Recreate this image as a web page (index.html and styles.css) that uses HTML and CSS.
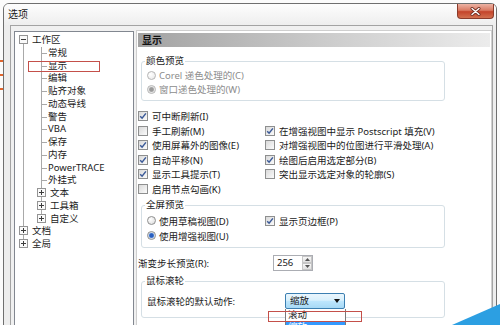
FILE: index.html
```html
<!DOCTYPE html>
<html lang="zh-CN">
<head>
    <meta charset="UTF-8">
    <title>选项</title>
    <link rel="stylesheet" href="styles.css">
</head>
<body>
    <!-- marcas naranjas fuera de la ventana -->
    <span class="mark mark-1"></span>
    <span class="mark mark-2"></span>
    <span class="mark mark-3"></span>

    <div class="window">
        <div class="titlebar">
            <span class="title">选项</span>
            <button class="close">
                <svg width="11" height="9" viewBox="0 0 11 9"><path d="M2 1.5L9 7.5M9 1.5L2 7.5" stroke="#6e2c20" stroke-width="3" stroke-linecap="round"/><path d="M2 1.5L9 7.5M9 1.5L2 7.5" stroke="#fff" stroke-width="1.4" stroke-linecap="round"/></svg>
            </button>
        </div>

        <div class="frame">
            <div class="client">
                <!-- arbol de categorias -->
                <div class="tree-box">
                    <ul class="tree">
                        <li><svg class="toggle" width="9" height="9" viewBox="0 0 9 9"><rect x="0.5" y="0.5" width="8" height="8" fill="#fafafa" stroke="#949494"/><path d="M2 4.5h5" stroke="#3c3c3c"/></svg>工作区
                            <ul>
                                <li class="leaf">常规</li>
                                <li class="leaf">显示<span class="ann ann-tree"></span></li>
                                <li class="leaf">编辑</li>
                                <li class="leaf">贴齐对象</li>
                                <li class="leaf">动态导线</li>
                                <li class="leaf">警告</li>
                                <li class="leaf">VBA</li>
                                <li class="leaf">保存</li>
                                <li class="leaf">内存</li>
                                <li class="leaf">PowerTRACE</li>
                                <li class="leaf">外挂式</li>
                                <li><svg class="toggle" width="9" height="9" viewBox="0 0 9 9"><rect x="0.5" y="0.5" width="8" height="8" fill="#fafafa" stroke="#949494"/><path d="M2 4.5h5M4.5 2v5" stroke="#3c3c3c"/></svg>文本</li>
                                <li><svg class="toggle" width="9" height="9" viewBox="0 0 9 9"><rect x="0.5" y="0.5" width="8" height="8" fill="#fafafa" stroke="#949494"/><path d="M2 4.5h5M4.5 2v5" stroke="#3c3c3c"/></svg>工具箱</li>
                                <li><svg class="toggle" width="9" height="9" viewBox="0 0 9 9"><rect x="0.5" y="0.5" width="8" height="8" fill="#fafafa" stroke="#949494"/><path d="M2 4.5h5M4.5 2v5" stroke="#3c3c3c"/></svg>自定义</li>
                            </ul>
                        </li>
                        <li><svg class="toggle" width="9" height="9" viewBox="0 0 9 9"><rect x="0.5" y="0.5" width="8" height="8" fill="#fafafa" stroke="#949494"/><path d="M2 4.5h5M4.5 2v5" stroke="#3c3c3c"/></svg>文档</li>
                        <li><svg class="toggle" width="9" height="9" viewBox="0 0 9 9"><rect x="0.5" y="0.5" width="8" height="8" fill="#fafafa" stroke="#949494"/><path d="M2 4.5h5M4.5 2v5" stroke="#3c3c3c"/></svg>全局</li>
                    </ul>
                </div>

                <!-- panel de la pagina "显示" -->
                <div class="panel">
                    <div class="panel-head">显示</div>

                    <fieldset class="group group-color">
                        <legend>颜色预览</legend>
                        <div class="opt disabled"><span class="radio"></span>Corel 递色处理的(C)</div>
                        <div class="opt disabled"><span class="radio on"></span>窗口递色处理的(W)</div>
                    </fieldset>

                    <div class="checks">
                        <div class="opt"><span class="check"><svg width="8" height="8" viewBox="0 0 8 8"><path d="M1.2 4.2L3.1 6.2L6.9 1.4" fill="none" stroke="#3b5a98" stroke-width="1.5"/></svg></span>可中断刷新(I)</div>
                        <div></div>
                        <div class="opt"><span class="check"></span>手工刷新(M)</div>
                        <div class="opt"><span class="check"><svg width="8" height="8" viewBox="0 0 8 8"><path d="M1.2 4.2L3.1 6.2L6.9 1.4" fill="none" stroke="#3b5a98" stroke-width="1.5"/></svg></span>在增强视图中显示 Postscript 填充(V)</div>
                        <div class="opt"><span class="check"><svg width="8" height="8" viewBox="0 0 8 8"><path d="M1.2 4.2L3.1 6.2L6.9 1.4" fill="none" stroke="#3b5a98" stroke-width="1.5"/></svg></span>使用屏幕外的图像(E)</div>
                        <div class="opt"><span class="check"></span>对增强视图中的位图进行平滑处理(A)</div>
                        <div class="opt"><span class="check"><svg width="8" height="8" viewBox="0 0 8 8"><path d="M1.2 4.2L3.1 6.2L6.9 1.4" fill="none" stroke="#3b5a98" stroke-width="1.5"/></svg></span>自动平移(N)</div>
                        <div class="opt"><span class="check"><svg width="8" height="8" viewBox="0 0 8 8"><path d="M1.2 4.2L3.1 6.2L6.9 1.4" fill="none" stroke="#3b5a98" stroke-width="1.5"/></svg></span>绘图后启用选定部分(B)</div>
                        <div class="opt"><span class="check"><svg width="8" height="8" viewBox="0 0 8 8"><path d="M1.2 4.2L3.1 6.2L6.9 1.4" fill="none" stroke="#3b5a98" stroke-width="1.5"/></svg></span>显示工具提示(T)</div>
                        <div class="opt"><span class="check"></span>突出显示选定对象的轮廓(S)</div>
                        <div class="opt"><span class="check"></span>启用节点勾画(K)</div>
                    </div>

                    <fieldset class="group group-full">
                        <legend>全屏预览</legend>
                        <div class="full-grid">
                            <div class="opt"><span class="radio"></span>使用草稿视图(D)</div>
                            <div class="opt"><span class="check"><svg width="8" height="8" viewBox="0 0 8 8"><path d="M1.2 4.2L3.1 6.2L6.9 1.4" fill="none" stroke="#3b5a98" stroke-width="1.5"/></svg></span>显示页边框(P)</div>
                            <div class="opt"><span class="radio on"></span>使用增强视图(U)</div>
                        </div>
                    </fieldset>

                    <div class="spin-row">
                        <span class="spin-label">渐变步长预览(R):</span>
                        <div class="spin">
                            <span class="spin-value">256</span>
                            <div class="spin-btns">
                                <span class="spin-btn"><svg width="5" height="3" viewBox="0 0 5 3"><path d="M0 3L2.5 0L5 3Z" fill="#555"/></svg></span>
                                <span class="spin-btn"><svg width="5" height="3" viewBox="0 0 5 3"><path d="M0 0L2.5 3L5 0Z" fill="#555"/></svg></span>
                            </div>
                        </div>
                    </div>

                    <fieldset class="group group-wheel">
                        <legend>鼠标滚轮</legend>
                        <div class="wheel-row">
                            <span class="wheel-label">鼠标滚轮的默认动作:</span>
                            <div class="combo">
                                <span class="combo-value">缩放</span>
                                <svg width="6" height="4" viewBox="0 0 6 4"><path d="M0 0L3 4L6 0Z" fill="#111"/></svg>
                                <div class="combo-list">
                                    <div class="combo-item">滚动</div>
                                    <div class="combo-item active">缩放</div>
                                </div>
                                <span class="ann ann-list"></span>
                            </div>
                        </div>
                    </fieldset>
                </div>
            </div>
        </div>
    </div>

    <svg class="corner" width="48" height="21" viewBox="0 0 48 21"><path d="M0 21L48 0L48 21Z" fill="#2c9fe2"/></svg>
</body>
</html>
```

FILE: styles.css
```css
* {
    box-sizing: border-box;
}
body {
    margin: 0;
    width: 500px;
    height: 325px;
    overflow: hidden;
    position: relative;
    background-color: #fbfbfb;
    font-family: "Noto Sans", "Noto Sans CJK SC", sans-serif;
    font-size: 9.5px;
    color: #1a1a1a;
}
.mark {
    position: absolute;
    left: 0;
    width: 3px;
    height: 2px;
    background-color: #e0652e;
}
.mark-1 { top: 60px; }
.mark-2 { top: 74px; }
.mark-3 { top: 88px; }

.window {
    margin: 3px 0 0 3px;
    width: 494px;
    height: 330px;
    border: 1px solid #6f6f6f;
    border-radius: 6px 6px 0 0;
    background-color: #ededed;
    display: flex;
    flex-direction: column;
}
.titlebar {
    height: 21px;
    flex: none;
    display: flex;
    justify-content: space-between;
    align-items: flex-start;
    padding: 0 2px 0 4px;
    background: linear-gradient(#fdfdfd, #eeeeee);
    border-radius: 5px 5px 0 0;
}
.title {
    line-height: 21px;
    font-size: 10px;
    color: #1a1a1a;
}
.close {
    width: 37px;
    height: 15px;
    padding: 0;
    border: 1px solid #8a3b2b;
    border-top: none;
    border-radius: 0 0 4px 4px;
    background: linear-gradient(#ecb3a4, #d97a63 45%, #c4442b 55%, #d2704f);
    display: flex;
    align-items: center;
    justify-content: center;
}
.frame {
    flex: 1;
    display: flex;
    padding: 0 3px 0 6px;
}
.client {
    flex: 1;
    display: flex;
    align-items: flex-start;
    gap: 2px;
    padding: 4px 0 0 3px;
    border: 1px solid #a3a3a3;
    border-bottom: none;
    background-color: #f0f0f0;
}

/* arbol */
.tree-box {
    width: 120px;
    height: 300px;
    margin-top: 1px;
    padding: 2px 0 0 8px;
    border: 1px solid #828790;
    background-color: #fff;
    color: #1b1b1b;
}
.tree, .tree ul {
    list-style: none;
    margin: 0;
    padding: 0;
}
.tree ul {
    margin-left: 18px;
}
.tree li {
    position: relative;
    line-height: 12.75px;
    white-space: nowrap;
}
.tree li::before {
    content: '';
    position: absolute;
    left: 0;
    top: 0;
    bottom: 0;
    border-left: 1px solid #a9a9a9;
}
.tree > li:first-child::before {
    top: 6px;
}
.tree li:last-child::before {
    bottom: auto;
    height: 7px;
}
.tree .leaf {
    padding-left: 7px;
}
.tree .leaf::after {
    content: '';
    position: absolute;
    left: 0;
    top: 6px;
    width: 6px;
    border-top: 1px solid #a9a9a9;
}
.toggle {
    position: relative;
    z-index: 1;
    vertical-align: -1px;
    margin: 0 4px 0 -4px;
}
.ann {
    position: absolute;
    border: 1px solid #c4504a;
}
.ann-tree {
    left: -13px;
    top: 1px;
    width: 72px;
    height: 11px;
}

/* panel derecho */
.panel {
    width: 356px;
    height: 300px;
    padding: 1px;
    border: 1px solid #cfcfcf;
    background-color: #fff;
}
.panel-head {
    margin-top: 1px;
    height: 14px;
    line-height: 14px;
    padding-left: 4px;
    font-size: 10px;
    font-weight: bold;
    color: #111;
    background: linear-gradient(to right, #a2a2a2, #cdcdcd 55%, #ececec);
}
.group {
    margin: 8px 0 0 3px;
    width: 304px;
    min-width: 0;
    padding: 1px 4px 4px 5px;
    border: 1px solid #d5dfe5;
    border-radius: 3px;
}
.group legend {
    padding: 0 1px;
    margin-left: -2px;
    line-height: 12px;
}
.group-full {
    margin-top: 3px;
    padding-top: 2px;
    padding-bottom: 4px;
}
.group-wheel {
    margin-top: 3px;
    padding-top: 6px;
    padding-bottom: 8px;
}
.opt {
    display: flex;
    align-items: center;
    height: 14px;
    white-space: nowrap;
}
.opt.disabled {
    color: #8d8d8d;
}
.radio {
    flex: none;
    width: 9px;
    height: 9px;
    margin-right: 3px;
    border: 1px solid #8e8f8f;
    border-radius: 50%;
    background: radial-gradient(circle at 35% 35%, #ffffff, #d8d8d8);
}
.radio.on {
    background: radial-gradient(circle, #2a5fbf 0 1.8px, #8bb3e8 2.6px, #e6e6e6 3.2px);
}
.disabled .radio {
    border-color: #b5b5b5;
    background: radial-gradient(circle at 35% 35%, #ffffff, #e6e6e6);
}
.disabled .radio.on {
    background: radial-gradient(circle, #9a9a9a 0 1.8px, #cdcdcd 2.6px, #f0f0f0 3.2px);
}
.check {
    flex: none;
    width: 10px;
    height: 10px;
    margin-right: 4px;
    border: 1px solid #8e8f8f;
    background: linear-gradient(135deg, #d9d9d9, #fbfbfb);
    display: flex;
    align-items: center;
    justify-content: center;
}
.checks {
    display: grid;
    grid-template-columns: 127px 1fr;
    grid-auto-rows: 14.6px;
    margin-top: 7.7px;
}
.checks .opt {
    height: 14.6px;
}
.full-grid {
    display: grid;
    grid-template-columns: 118px 1fr;
    grid-auto-rows: 15px;
}
.full-grid .opt {
    height: 15px;
}

/* contador */
.spin-row {
    display: flex;
    align-items: center;
    height: 18px;
    margin-top: 6px;
}
.spin-label {
    width: 135px;
}
.spin {
    display: flex;
    width: 40px;
    height: 16px;
    border: 1px solid #abadb3;
    background-color: #fff;
}
.spin-value {
    flex: 1;
    padding-left: 3px;
    line-height: 14px;
}
.spin-btns {
    width: 10px;
    display: flex;
    flex-direction: column;
}
.spin-btn {
    flex: 1;
    display: flex;
    align-items: center;
    justify-content: center;
    border: 1px solid #c6c6c6;
    background: linear-gradient(#f7f7f7, #e1e1e1);
}

/* combo */
.wheel-row {
    display: flex;
    align-items: center;
    height: 16px;
}
.wheel-label {
    width: 138px;
}
.combo {
    position: relative;
    width: 60px;
    height: 16px;
    display: flex;
    align-items: center;
    justify-content: space-between;
    padding: 0 4px 0 4px;
    border: 1px solid #3c7fb1;
    border-radius: 2px;
    background: linear-gradient(#eaf6fd, #d9f0fc 45%, #bee6fd 50%, #a7d9f5);
}
.combo-value {
    line-height: 14px;
}
.combo-list {
    position: absolute;
    top: 15px;
    left: -1px;
    width: 61px;
    border: 1px solid #7a7a7a;
    border-top: none;
    background-color: #fff;
}
.combo-item {
    line-height: 12px;
    padding-left: 2px;
}
.combo-item.active {
    background-color: #3399ff;
    color: #fff;
}
.ann-list {
    left: -18px;
    top: 17px;
    width: 94px;
    height: 11px;
}
.corner {
    position: absolute;
    right: 0;
    bottom: 0;
}
```
